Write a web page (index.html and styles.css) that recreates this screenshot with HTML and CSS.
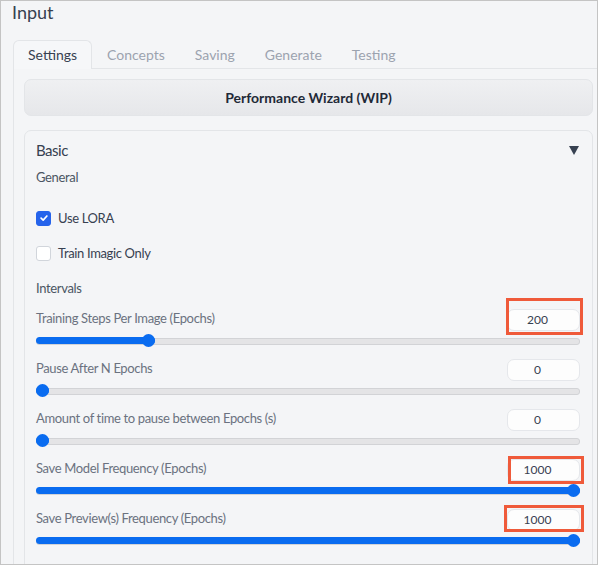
FILE: index.html
```html
<!DOCTYPE html>
<html lang="en">
<head>
  <meta charset="UTF-8">
  <meta name="viewport" content="width=device-width, initial-scale=1.0">
  <title>Input</title>
  <link rel="stylesheet" href="styles.css">
</head>
<body>
  <div class="frame">
    <div class="title">Input</div>

    <div class="tabs">
      <div class="tab active">Settings</div>
      <div class="tab">Concepts</div>
      <div class="tab">Saving</div>
      <div class="tab">Generate</div>
      <div class="tab">Testing</div>
    </div>

    <div class="tab-panel">
      <button class="wizard-btn">Performance Wizard (WIP)</button>

      <div class="accordion">
        <div class="accordion-header">
          <span>Basic</span>
          <span class="caret"></span>
        </div>

        <div class="group-label">General</div>

        <label class="check-row first">
          <span class="checkbox checked">
            <svg width="10" height="10" viewBox="0 0 12 12" fill="none" stroke="white" stroke-width="2" stroke-linecap="round" stroke-linejoin="round">
              <path d="M2.5 6.2L5 8.6L9.5 3.6" />
            </svg>
          </span>
          Use LORA
        </label>

        <label class="check-row">
          <span class="checkbox"></span>
          Train Imagic Only
        </label>

        <div class="group-label intervals">Intervals</div>

        <!-- Sliders -->
        <div class="slider-row">
          <div class="slider-head">
            <span class="slider-label">Training Steps Per Image (Epochs)</span>
            <span class="num-input">200</span>
          </div>
          <div class="track"><div class="fill" style="--v: 0.2"></div></div>
          <div class="highlight hl-1"></div>
        </div>

        <div class="slider-row">
          <div class="slider-head">
            <span class="slider-label">Pause After N Epochs</span>
            <span class="num-input">0</span>
          </div>
          <div class="track"><div class="fill" style="--v: 0"></div></div>
        </div>

        <div class="slider-row">
          <div class="slider-head">
            <span class="slider-label">Amount of time to pause between Epochs (s)</span>
            <span class="num-input">0</span>
          </div>
          <div class="track"><div class="fill" style="--v: 0"></div></div>
        </div>

        <div class="slider-row">
          <div class="slider-head">
            <span class="slider-label">Save Model Frequency (Epochs)</span>
            <span class="num-input">1000</span>
          </div>
          <div class="track"><div class="fill" style="--v: 1"></div></div>
          <div class="highlight hl-2"></div>
        </div>

        <div class="slider-row">
          <div class="slider-head">
            <span class="slider-label">Save Preview(s) Frequency (Epochs)</span>
            <span class="num-input">1000</span>
          </div>
          <div class="track"><div class="fill" style="--v: 1"></div></div>
          <div class="highlight hl-3"></div>
        </div>
      </div>
    </div>
  </div>
</body>
</html>
```

FILE: styles.css
```css
* {
  box-sizing: border-box;
}

body {
  margin: 0;
  padding: 0;
  font-family: "Lato", "Noto Sans", sans-serif;
  color: #374151;
}

.frame {
  width: 598px;
  height: 565px;
  overflow: hidden;
  border: 1px solid #c4c4c4;
  background: #f4f5f7;
}

.title {
  padding-left: 11px;
  font-size: 18px;
  line-height: 22px;
  color: #374151;
}

.tabs {
  display: flex;
  margin: 17px 0 0 12px;
  border-bottom: 1px solid #e3e5e8;
}

.tab {
  padding: 0 14px;
  height: 28px;
  line-height: 27px;
  font-size: 14px;
  color: #9ca3af;
  border: 1px solid transparent;
  border-bottom: none;
}

.tab.active {
  color: #374151;
  background: #f6f7f9;
  border-color: #e3e5e8;
  border-radius: 6px 6px 0 0;
  margin-bottom: -1px;
  height: 29px;
}

.tab-panel {
  margin-left: 12px;
  border-left: 1px solid #e3e5e8;
  padding: 10px 4px 0 10px;
}

.wizard-btn {
  display: block;
  width: 100%;
  height: 37px;
  border: 1px solid #e3e5e8;
  border-radius: 7px;
  background: linear-gradient(180deg, #eff0f2 0%, #e6e7ea 100%);
  font-family: inherit;
  font-size: 14px;
  font-weight: 700;
  color: #1f2937;
}

.accordion {
  margin-top: 14px;
  border: 1px solid #e3e5e8;
  border-radius: 7px;
  padding: 8px 12px 0 11px;
  height: 460px;
  letter-spacing: -0.35px;
}

.accordion-header {
  display: flex;
  justify-content: space-between;
  align-items: center;
  height: 22px;
  font-size: 15px;
  letter-spacing: -0.5px;
  color: #374151;
}

.caret {
  width: 0;
  height: 0;
  border-left: 5px solid transparent;
  border-right: 5px solid transparent;
  border-top: 9px solid #374151;
  margin-right: 1px;
}

.group-label {
  margin-top: 6px;
  font-size: 13px;
  line-height: 20px;
  color: #4b5563;
}

.group-label.intervals {
  margin-top: 15px;
}

.check-row {
  display: flex;
  align-items: center;
  gap: 7px;
  height: 20px;
  margin-top: 15px;
  font-size: 13px;
  color: #374151;
}

.check-row.first {
  margin-top: 21px;
}

.checkbox {
  width: 15px;
  height: 15px;
  border: 1px solid #d1d5db;
  border-radius: 3px;
  background: #ffffff;
  display: flex;
  align-items: center;
  justify-content: center;
}

.checkbox.checked {
  background: #2563eb;
  border-color: #2563eb;
}

.slider-row {
  position: relative;
  margin-bottom: 12px;
}

.intervals + .slider-row {
  margin-top: 11px;
}

.slider-head {
  display: flex;
  justify-content: space-between;
  align-items: center;
  height: 22px;
  margin-bottom: 3px;
}

.slider-label {
  font-size: 13px;
  margin-bottom: 4px;
  color: #6b7280;
}

.num-input {
  width: 73px;
  height: 22px;
  line-height: 20px;
  padding-right: 12px;
  text-align: center;
  font-size: 12px;
  letter-spacing: 0;
  color: #374151;
  background: #fdfdfd;
  border: 1px solid #e5e7eb;
  border-radius: 7px;
}

.track {
  position: relative;
  height: 13px;
}

.track::before {
  content: "";
  position: absolute;
  left: 0;
  right: 0;
  top: 4px;
  height: 5px;
  background: #e4e4e6;
  border: 1px solid #d2d3d6;
  border-radius: 3px;
}

.fill {
  position: absolute;
  left: 0;
  top: 3px;
  height: 7px;
  width: calc(13px + (100% - 13px) * var(--v));
  background: #0a6cf0;
  border-radius: 4px;
}

.fill::after {
  content: "";
  position: absolute;
  right: 0;
  top: -3px;
  width: 13px;
  height: 13px;
  border-radius: 50%;
  background: #0a6cf0;
}

.highlight {
  position: absolute;
  border: 3px solid #ef5a3a;
}

.hl-1 {
  top: -11px;
  right: -3px;
  width: 77px;
  height: 37px;
}

.hl-2 {
  top: -3px;
  right: -4px;
  width: 76px;
  height: 28px;
}

.hl-3 {
  top: -4px;
  right: -4px;
  width: 80px;
  height: 27px;
}
```
